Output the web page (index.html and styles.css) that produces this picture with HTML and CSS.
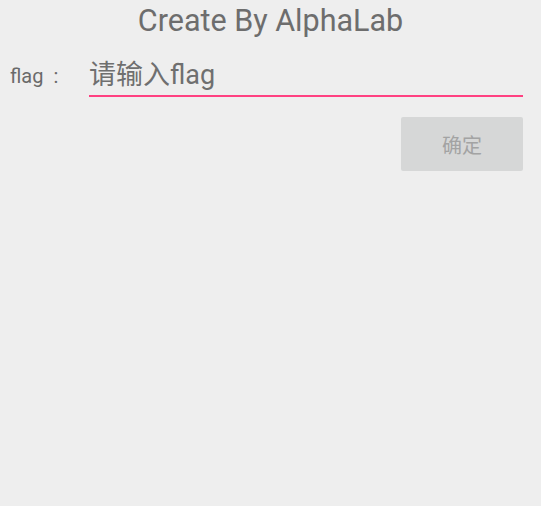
FILE: index.html
```html
<!DOCTYPE html>
<html>
<head>
<meta charset="utf-8">
<link rel="stylesheet" href="styles.css">
</head>
<body>
<div class="app">
  <div class="title">Create By AlphaLab</div>
  <div class="row">
    <div class="label">flag<span class="colon">:</span></div>
    <div class="field">请输入flag</div>
  </div>
  <div class="actions">
    <div class="btn">确定</div>
  </div>
</div>
</body>
</html>
```
FILE: styles.css
```css
html, body {
  margin: 0;
  padding: 0;
  background: #eeeeee;
}
.app {
  width: 541px;
  height: 506px;
  font-family: Roboto, "Noto Sans CJK SC", sans-serif;
  color: #6d6d6d;
}
.title {
  text-align: center;
  font-size: 30.5px;
  line-height: 38px;
  padding-top: 2px;
  height: 42px;
}
.row {
  display: flex;
  align-items: flex-end;
  height: 53px;
}
.label {
  font-size: 20px;
  line-height: 24px;
  padding-left: 10px;
  width: 89px;
  box-sizing: border-box;
  margin-bottom: 9px;
  color: #6a6a6a;
}
.colon {
  margin-left: 10px;
}
.field {
  flex: 1;
  margin-right: 18px;
  border-bottom: 2px solid #ff4081;
  height: 40px;
  line-height: 40px;
  font-size: 27px;
  color: #6f6f6f;
  white-space: nowrap;
}
.actions {
  display: flex;
  justify-content: flex-end;
  padding-top: 20px;
  padding-right: 18px;
}
.btn {
  width: 122px;
  height: 54px;
  background: #d6d7d7;
  border-radius: 2px;
  display: flex;
  align-items: center;
  justify-content: center;
  font-family: "Noto Sans CJK SC", sans-serif;
  font-size: 20px;
  color: #a3a3a3;
}
```
